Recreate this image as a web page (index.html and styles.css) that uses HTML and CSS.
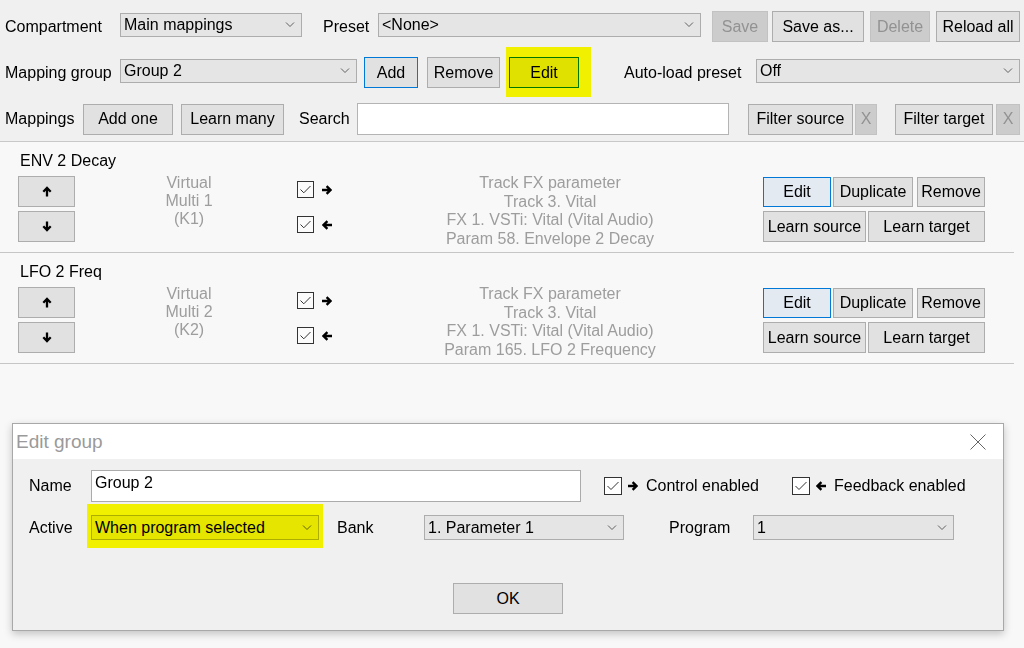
FILE: index.html
```html
<!DOCTYPE html>
<html>
<head>
<meta charset="utf-8">
<title>ReaLearn</title>
<link rel="stylesheet" href="styles.css">
</head>
<body>
<div class="toolbar">
  <div class="trow">
    <span class="lbl l-comp">Compartment</span>
    <div class="combo cb-comp"><span>Main mappings</span><svg class="chev" width="10" height="6" viewBox="0 0 10 6"><polyline points="1,0.5 5,4.5 9,0.5"/></svg></div>
    <span class="lbl l-preset">Preset</span>
    <div class="combo cb-preset"><span>&lt;None&gt;</span><svg class="chev" width="10" height="6" viewBox="0 0 10 6"><polyline points="1,0.5 5,4.5 9,0.5"/></svg></div>
    <button class="btn dis b-save">Save</button>
    <button class="btn b-saveas">Save as...</button>
    <button class="btn dis b-delete">Delete</button>
    <button class="btn b-reload">Reload all</button>
  </div>
  <div class="trow">
    <span class="lbl l-group">Mapping group</span>
    <div class="combo cb-group"><span>Group 2</span><svg class="chev" width="10" height="6" viewBox="0 0 10 6"><polyline points="1,0.5 5,4.5 9,0.5"/></svg></div>
    <button class="btn focus b-add">Add</button>
    <button class="btn b-remove">Remove</button>
    <span class="hlw hlw-edit"><button class="btn focus b-edit">Edit</button><span class="hl hl-edit"></span></span>
    <span class="lbl l-auto">Auto-load preset</span>
    <div class="combo cb-auto"><span>Off</span><svg class="chev" width="10" height="6" viewBox="0 0 10 6"><polyline points="1,0.5 5,4.5 9,0.5"/></svg></div>
  </div>
  <div class="trow">
    <span class="lbl l-map">Mappings</span>
    <button class="btn b-addone">Add one</button>
    <button class="btn b-learnmany">Learn many</button>
    <span class="lbl l-search">Search</span>
    <div class="textin search"></div>
    <button class="btn b-fsrc">Filter source</button>
    <button class="btn dis b-x1">X</button>
    <button class="btn b-ftgt">Filter target</button>
    <button class="btn dis b-x2">X</button>
  </div>
</div>

<div class="list">
  <div class="mrow">
    <div class="mtitle">ENV 2 Decay</div>
    <div class="mbody">
      <div class="updown">
        <button class="btn ab"><svg width="10" height="11" viewBox="0 0 10 11"><path d="M5 10.5V2M1.3 5.7L5 2L8.7 5.7"/></svg></button>
        <button class="btn ab"><svg width="10" height="11" viewBox="0 0 10 11"><path d="M5 0.5V9M1.3 5.3L5 9L8.7 5.3"/></svg></button>
      </div>
      <div class="src">Virtual<br>Multi 1<br>(K1)</div>
      <div class="checks">
        <div class="chkline first"><svg class="cbx" width="17" height="17" viewBox="0 0 17 17"><rect x="0.5" y="0.5" width="16" height="16"/><polyline points="3.5,8.5 6.8,11.8 13.5,5"/></svg><svg class="arr" width="10" height="10" viewBox="0 0 10 10"><path d="M0 5H8.5M4.6 1.1L8.5 5L4.6 8.9"/></svg></div>
        <div class="chkline second"><svg class="cbx" width="17" height="17" viewBox="0 0 17 17"><rect x="0.5" y="0.5" width="16" height="16"/><polyline points="3.5,8.5 6.8,11.8 13.5,5"/></svg><svg class="arr" width="10" height="10" viewBox="0 0 10 10"><path d="M10 5H1.5M5.4 1.1L1.5 5L5.4 8.9"/></svg></div>
      </div>
      <div class="tgt">Track FX parameter<br>Track 3. Vital<br>FX 1. VSTi: Vital (Vital Audio)<br>Param 58. Envelope 2 Decay</div>
      <div class="acts">
        <div class="arow a1"><button class="btn focus rowedit">Edit</button><button class="btn b-dup">Duplicate</button><button class="btn b-rem">Remove</button></div>
        <div class="arow a2"><button class="btn b-lsrc">Learn source</button><button class="btn b-ltgt">Learn target</button></div>
      </div>
    </div>
  </div>
  <div class="mrow">
    <div class="mtitle">LFO 2 Freq</div>
    <div class="mbody">
      <div class="updown">
        <button class="btn ab"><svg width="10" height="11" viewBox="0 0 10 11"><path d="M5 10.5V2M1.3 5.7L5 2L8.7 5.7"/></svg></button>
        <button class="btn ab"><svg width="10" height="11" viewBox="0 0 10 11"><path d="M5 0.5V9M1.3 5.3L5 9L8.7 5.3"/></svg></button>
      </div>
      <div class="src">Virtual<br>Multi 2<br>(K2)</div>
      <div class="checks">
        <div class="chkline first"><svg class="cbx" width="17" height="17" viewBox="0 0 17 17"><rect x="0.5" y="0.5" width="16" height="16"/><polyline points="3.5,8.5 6.8,11.8 13.5,5"/></svg><svg class="arr" width="10" height="10" viewBox="0 0 10 10"><path d="M0 5H8.5M4.6 1.1L8.5 5L4.6 8.9"/></svg></div>
        <div class="chkline second"><svg class="cbx" width="17" height="17" viewBox="0 0 17 17"><rect x="0.5" y="0.5" width="16" height="16"/><polyline points="3.5,8.5 6.8,11.8 13.5,5"/></svg><svg class="arr" width="10" height="10" viewBox="0 0 10 10"><path d="M10 5H1.5M5.4 1.1L1.5 5L5.4 8.9"/></svg></div>
      </div>
      <div class="tgt">Track FX parameter<br>Track 3. Vital<br>FX 1. VSTi: Vital (Vital Audio)<br>Param 165. LFO 2 Frequency</div>
      <div class="acts">
        <div class="arow a1"><button class="btn focus rowedit">Edit</button><button class="btn b-dup">Duplicate</button><button class="btn b-rem">Remove</button></div>
        <div class="arow a2"><button class="btn b-lsrc">Learn source</button><button class="btn b-ltgt">Learn target</button></div>
      </div>
    </div>
  </div>
</div>

<div class="dialog">
  <div class="dtitle">
    <span>Edit group</span>
    <svg class="close" width="16" height="16" viewBox="0 0 16 16"><path d="M0.5 0.5L15.5 15.5M15.5 0.5L0.5 15.5"/></svg>
  </div>
  <div class="dbody">
    <div class="drow r-name">
      <span class="lbl dl">Name</span>
      <div class="textin namebox">Group 2</div>
      <span class="chkunit u1">
        <svg class="cbx" width="18" height="18" viewBox="0 0 18 18"><rect x="0.5" y="0.5" width="17" height="17"/><polyline points="3.5,9 7,12.5 14.5,5"/></svg>
        <svg class="arr" width="10" height="10" viewBox="0 0 10 10"><path d="M0 5H8.5M4.6 1.1L8.5 5L4.6 8.9"/></svg>
        <span>Control enabled</span>
      </span>
      <span class="chkunit u2">
        <svg class="cbx" width="18" height="18" viewBox="0 0 18 18"><rect x="0.5" y="0.5" width="17" height="17"/><polyline points="3.5,9 7,12.5 14.5,5"/></svg>
        <svg class="arr" width="10" height="10" viewBox="0 0 10 10"><path d="M10 5H1.5M5.4 1.1L1.5 5L5.4 8.9"/></svg>
        <span>Feedback enabled</span>
      </span>
    </div>
    <div class="drow r-active">
      <span class="lbl dl">Active</span>
      <span class="hlw"><div class="combo dcombo cb-active"><span>When program selected</span><svg class="chev" width="10" height="6" viewBox="0 0 10 6"><polyline points="1,0.5 5,4.5 9,0.5"/></svg></div><span class="hl hl-active"></span></span>
      <span class="lbl l-bank">Bank</span>
      <div class="combo dcombo cb-bank"><span>1. Parameter 1</span><svg class="chev" width="10" height="6" viewBox="0 0 10 6"><polyline points="1,0.5 5,4.5 9,0.5"/></svg></div>
      <span class="lbl l-prog">Program</span>
      <div class="combo dcombo cb-prog"><span>1</span><svg class="chev" width="10" height="6" viewBox="0 0 10 6"><polyline points="1,0.5 5,4.5 9,0.5"/></svg></div>
    </div>
    <div class="dfoot"><button class="btn ok">OK</button></div>
  </div>
</div>
</body>
</html>
```

FILE: styles.css
```css
* { box-sizing: border-box; }
html, body { margin: 0; padding: 0; }
body {
  width: 1024px;
  height: 648px;
  overflow: hidden;
  position: relative;
  background: #f8f8f8;
  font-family: "Liberation Sans", Arial, sans-serif;
  font-size: 16px;
  color: #000;
}

/* ---------- toolbar ---------- */
.toolbar {
  height: 142px;
  background: #f0f0f0;
  border-bottom: 1px solid #c8c8c8;
  padding: 11px 0 0 5px;
  display: flex;
  flex-direction: column;
  gap: 15px;
}
.trow { display: flex; align-items: center; min-height: 31px; }
.lbl { flex: none; white-space: nowrap; }

.btn {
  flex: none;
  font: inherit;
  color: #000;
  height: 31px;
  padding: 0;
  margin: 0;
  background: #e1e1e1;
  border: 1px solid #adadad;
  border-radius: 0;
  display: flex;
  align-items: center;
  justify-content: center;
}
.btn.dis { background: #cccccc; border-color: #c2c2c2; color: #929292; }
.btn.focus { border-color: #0078d7; }

.combo {
  flex: none;
  align-self: flex-start;
  margin-top: 2px;
  height: 24px;
  background: #e5e5e5;
  border: 1px solid #adadad;
  display: flex;
  align-items: center;
  justify-content: space-between;
  padding: 0 6px 0 3px;
  white-space: nowrap;
}
.chev { flex: none; }
.chev polyline { fill: none; stroke: #606060; stroke-width: 1; }

.textin { flex: none; background: #fff; border: 1px solid #b4b4b4; }

.l-comp { width: 115px; }
.cb-comp { width: 182px; }
.l-preset { width: 55px; margin-left: 21px; }
.cb-preset { width: 323px; }
.b-save { width: 56px; margin-left: 11px; }
.b-saveas { width: 92px; margin-left: 4px; }
.b-delete { width: 60px; margin-left: 6px; }
.b-reload { width: 84px; margin-left: 6px; }

.l-group { width: 115px; }
.cb-group { width: 237px; }
.b-add { width: 54px; margin-left: 7px; }
.b-remove { width: 73px; margin-left: 9px; }
.hlw { position: relative; flex: none; display: flex; }
.hlw-edit { margin-left: 9px; }
.b-edit { width: 70px; }
.hl { position: absolute; background: #ffff00; mix-blend-mode: multiply; pointer-events: none; }
.hl-edit { top: -10px; bottom: -9px; left: -3px; right: -12px; }
.l-auto { width: 132px; margin-left: 45px; }
.cb-auto { width: 264px; }

.l-map { width: 78px; }
.b-addone { width: 90px; }
.b-learnmany { width: 103px; margin-left: 8px; }
.l-search { width: 58px; margin-left: 15px; }
.search { width: 372px; height: 32px; }
.b-fsrc { width: 105px; margin-left: 19px; }
.b-x1 { width: 22px; margin-left: 2px; }
.b-ftgt { width: 98px; margin-left: 18px; }
.b-x2 { width: 24px; margin-left: 3px; }

/* ---------- mapping list ---------- */
.list { width: 1014px; }
.mrow {
  height: 111px;
  border-bottom: 1px solid #c6c6c6;
  padding: 10px 0 0 18px;
}
.mtitle { line-height: 18px; padding-left: 2px; }
.mbody { display: flex; margin-top: 6px; }
.updown { width: 57px; flex: none; display: flex; flex-direction: column; gap: 4px; }
.ab { width: 57px; }
.ab svg path { fill: none; stroke: #000; stroke-width: 2.3; }
.src {
  width: 138px; margin-left: 45px; margin-top: -2px;
  text-align: center; line-height: 18px; color: #9d9d9d; flex: none;
}
.checks { width: 43px; margin-left: 39px; flex: none; }
.chkline { display: flex; align-items: center; gap: 8px; height: 17px; }
.chkline.first { margin-top: 5px; }
.chkline.second { margin-top: 18px; }
.cbx rect { fill: #fbfbfb; stroke: #333; stroke-width: 1; }
.cbx polyline { fill: none; stroke: #333; stroke-width: 1; }
.arr { flex: none; }
.arr path { fill: none; stroke: #000; stroke-width: 2.3; }
.tgt {
  width: 300px; margin-left: 60px; margin-top: -2px;
  text-align: center; line-height: 18.5px; color: #9d9d9d; flex: none;
}
.acts { margin-left: 63px; width: 222px; flex: none; }
.arow { display: flex; }
.a1 { margin-top: 1px; }
.a1 .btn { height: 30px; }
.a2 { margin-top: 4px; }
.rowedit { width: 68px; background: #e3eaf2; }
.b-dup { width: 80px; margin-left: 2px; }
.b-rem { width: 68px; margin-left: 4px; }
.b-lsrc { width: 103px; }
.b-ltgt { width: 117px; margin-left: 2px; }

/* ---------- dialog window ---------- */
.dialog {
  position: absolute;
  left: 12px;
  top: 423px;
  width: 992px;
  height: 208px;
  border: 1px solid #a8a8a8;
  background: #f0f0f0;
  box-shadow: 0 3px 8px rgba(0, 0, 0, 0.22);
}
.dtitle {
  height: 35px;
  background: #fff;
  display: flex;
  align-items: center;
  justify-content: space-between;
  padding: 0 17px 0 3px;
  color: #9a9a9a;
  font-size: 19px;
}
.close path { fill: none; stroke: #666; stroke-width: 1; }
.dbody { padding: 11px 0 16px 16px; }
.drow { display: flex; align-items: center; }
.r-name { height: 32px; }
.r-active { height: 25px; margin-top: 13px; }
.dl { width: 62px; }
.namebox { width: 490px; height: 32px; padding: 3px 3px; line-height: 18px; border-color: #ababab; }
.chkunit { flex: none; display: flex; align-items: center; }
.chkunit .arr { margin-left: 6px; }
.chkunit span { margin-left: 8px; white-space: nowrap; }
.u1 { width: 188px; margin-left: 23px; }
.u2 { margin-left: 0; }
.cbx { flex: none; }
.chkunit .cbx rect { fill: #fff; }
.dcombo { margin-top: 0; align-self: center; height: 25px; }
.cb-active { width: 228px; }
.hl-active { top: -11px; bottom: -8px; left: -4px; right: -4px; }
.l-bank { width: 87px; margin-left: 18px; }
.cb-bank { width: 200px; }
.l-prog { width: 84px; margin-left: 45px; }
.cb-prog { width: 201px; }
.dfoot { display: flex; justify-content: center; margin-top: 43px; padding-right: 16px; }
.ok { width: 110px; }
```
